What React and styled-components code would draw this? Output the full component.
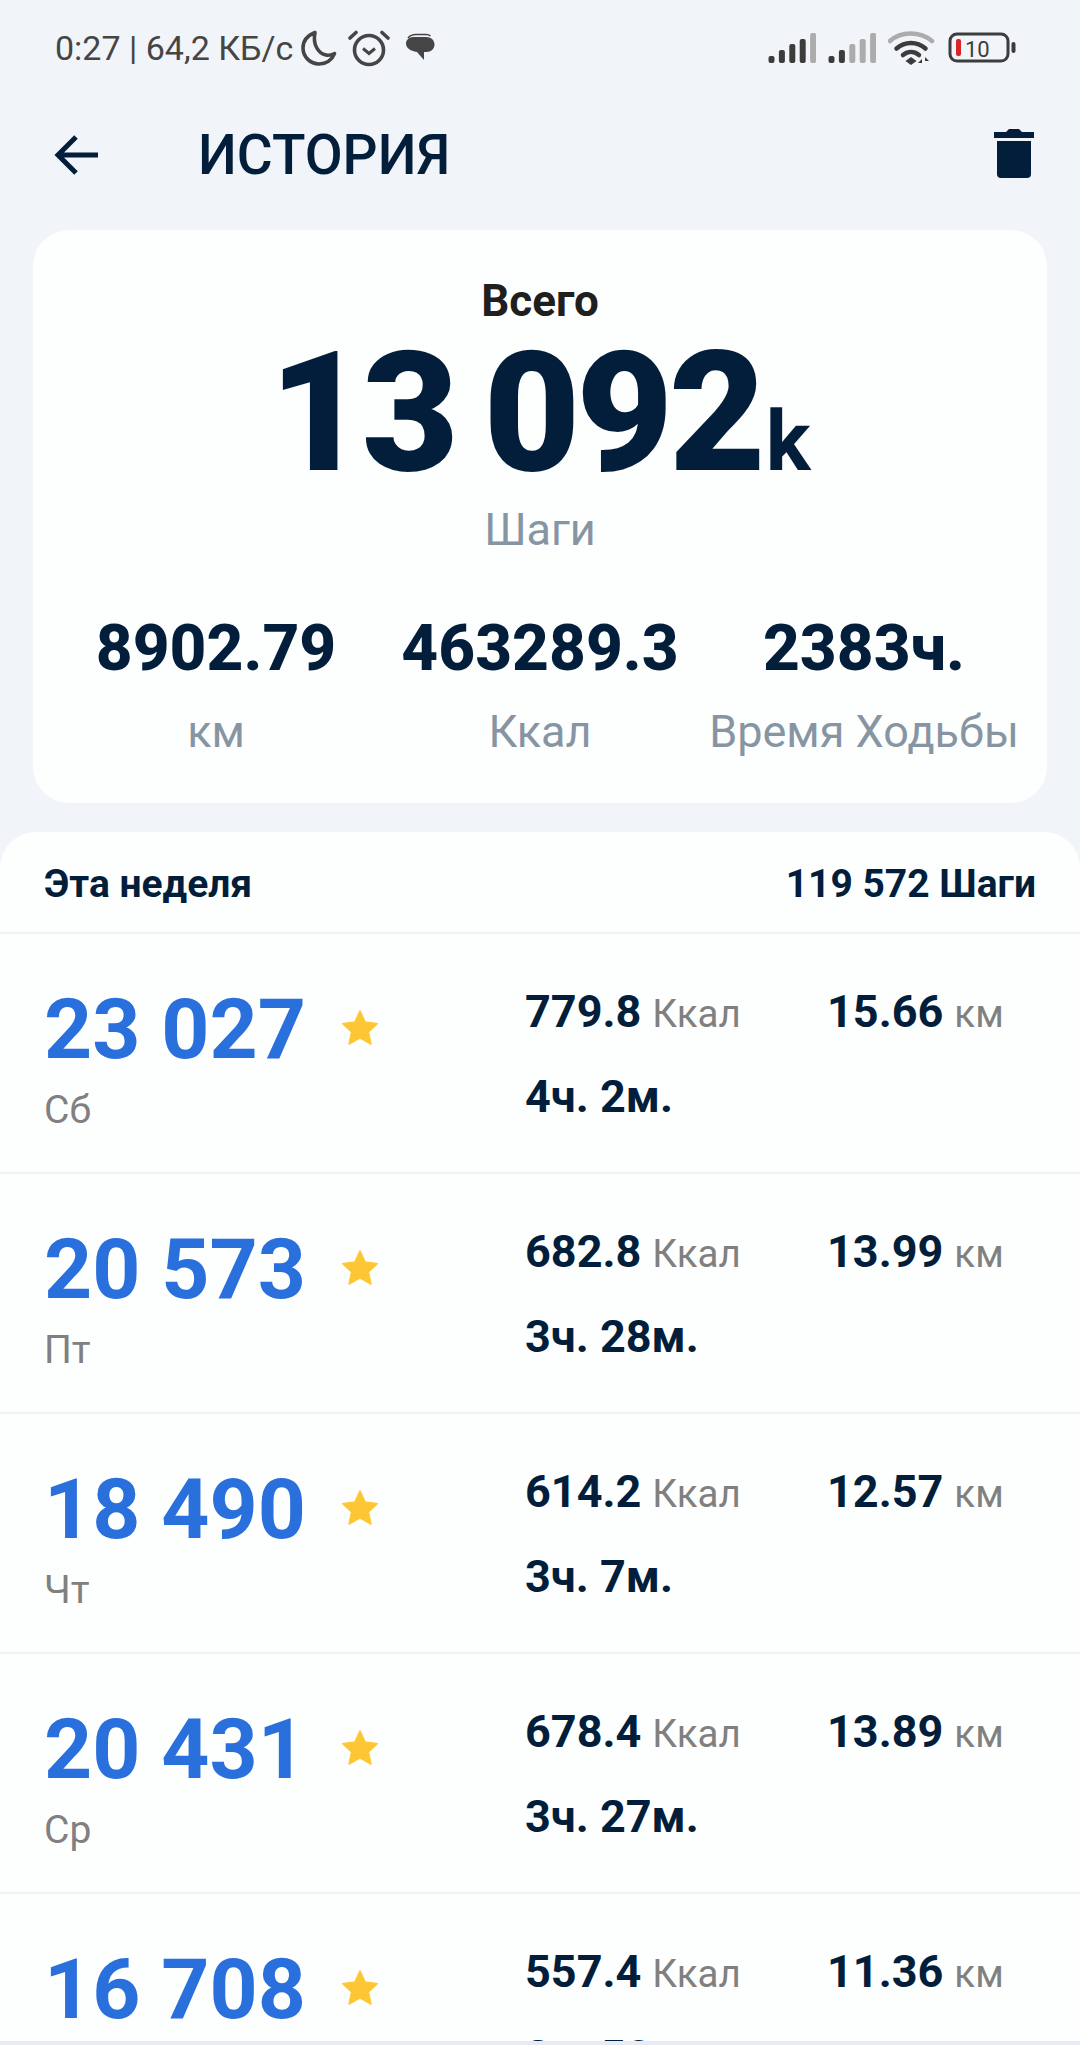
import React from "react";
import styled, { createGlobalStyle } from "styled-components";

const Global = createGlobalStyle`
  html, body { margin: 0; padding: 0; background: #f1f4f8; }
  * { box-sizing: border-box; }
`;

const Page = styled.div`
  width: 1080px;
  height: 2045px;
  background: #f1f4f8;
  font-family: Roboto, "Liberation Sans", sans-serif;
  display: flex;
  flex-direction: column;
  overflow: hidden;
  color: #031e3a;
`;

const StatusBar = styled.div`
  height: 96px;
  padding: 0 62px 0 55px;
  display: flex;
  align-items: center;
  justify-content: space-between;
  color: #454545;
`;
const StatusGroup = styled.div`
  display: flex;
  align-items: center;
  gap: ${(p) => p.$gap || 0}px;
`;
const StatusText = styled.span`
  font-size: 34px;
  letter-spacing: 0;
  margin-right: 7px;
`;

const Header = styled.div`
  height: 134px;
  padding: 0 46px 16px 54px;
  display: flex;
  align-items: center;
`;
const Title = styled.h1`
  margin: 0 0 0 100px;
  flex: 1;
  font-size: 55px;
  line-height: 60px;
  font-weight: 500;
`;
const TrashWrap = styled.div`
  display: flex;
  margin-bottom: 5px;
`;

const SummaryCard = styled.section`
  margin: 0 33px;
  height: 573px;
  background: #fdfefe;
  border-radius: 36px;
  padding: 46px 21px 0;
  display: flex;
  flex-direction: column;
  align-items: center;
`;
const Total = styled.div`
  font-size: 44px;
  line-height: 50px;
  font-weight: 700;
  color: #1f1f1f;
`;
const BigRow = styled.div`
  height: 152px;
  display: flex;
  align-items: baseline;
  line-height: 152px;
  margin-top: 11px;
`;
const BigNumber = styled.span`
  font-size: 167px;
  font-weight: 900;
  letter-spacing: -4px;
  word-spacing: -9px;
`;
const BigUnit = styled.span`
  margin-left: 4px;
  font-size: 84px;
  font-weight: 700;
`;
const Muted = styled.div`
  font-size: 45px;
  line-height: 50px;
  color: #8795a3;
`;
const StepsLabel = styled(Muted)`
  margin-top: 16px;
`;
const Stats = styled.div`
  width: 100%;
  margin-top: 59px;
  display: grid;
  grid-template-columns: repeat(3, 1fr);
`;
const Stat = styled.div`
  display: flex;
  flex-direction: column;
  align-items: center;
  gap: 23px;
  white-space: nowrap;
`;
const StatValue = styled.div`
  font-size: 64px;
  line-height: 70px;
  font-weight: 800;
`;

const ListPanel = styled.section`
  margin-top: 29px;
  flex: 1;
  min-height: 0;
  background: #fdfefe;
  border-radius: 36px 36px 0 0;
  overflow: hidden;
`;
const WeekHeader = styled.div`
  height: 102px;
  padding: 4px 44px 0;
  display: flex;
  align-items: center;
  justify-content: space-between;
  font-size: 39px;
  font-weight: 700;
  border-bottom: 2px solid #f0f2f7;
`;
const Row = styled.article`
  height: 240px;
  display: grid;
  grid-template-columns: 525px 302px 1fr;
  border-bottom: 2px solid #f0f2f7;
`;
const DayCell = styled.div`
  padding: 51px 0 0 44px;
`;
const StepLine = styled.div`
  display: flex;
  align-items: center;
  gap: 35px;
  height: 90px;
`;
const Steps = styled.span`
  font-size: 84px;
  line-height: 90px;
  font-weight: 700;
  color: #2a70dc;
`;
const StarWrap = styled.span`
  display: flex;
  margin-bottom: 6px;
`;
const Day = styled.div`
  margin-top: 13px;
  font-size: 39px;
  line-height: 44px;
  color: #808080;
`;
const MetricColumn = styled.div`
  padding-top: 54px;
`;
const Metric = styled.div`
  height: 48px;
  font-size: 45px;
  line-height: 48px;
  font-weight: 700;
  white-space: nowrap;
  margin-bottom: ${(p) => p.$mb || 0}px;
`;
const Unit = styled.span`
  margin-left: 11px;
  font-size: 38.5px;
  font-weight: 400;
  color: #808080;
`;

const BottomStrip = styled.div`
  height: 4px;
  background: #e6ebf6;
  flex: none;
`;

const Moon = () => (
  <svg width="38" height="38" viewBox="0 0 38 38" fill="none" stroke="#454545" strokeWidth="3.6">
    <path d="M15 3.500C7.500 6.500 3 12 3 19c0 9 7.500 16 16 16 7 0 13-4 15.500-10.500-3 1.500-6 2-8.500 1.500C18 24.500 12.500 15 15 3.500Z" strokeLinejoin="round" />
  </svg>
);
const Alarm = () => (
  <svg width="42" height="38" viewBox="0 0 42 38" fill="none" stroke="#454545" style={{ marginLeft: 10 }}>
    <circle cx="21" cy="21" r="14.500" strokeWidth="3.600" />
    <path d="M15 19.500l6 5 6-5" strokeWidth="3" />
    <path d="M2 9l6-5.500M40 9l-6-5.500" strokeWidth="3.600" strokeLinecap="round" />
  </svg>
);
const Chat = () => (
  <svg width="30" height="30" viewBox="0 0 30 30" style={{ marginLeft: 15 }}>
    <path d="M8 4h13c5 0 8.500 3 8.500 7.500S26 19 21.500 19H19v8l-7-8C5 18 1 14.500 1 10.500 1 7 4 4 8 4Z" fill="#454545" />
    <path d="M3 5C5 2.500 8 1.500 11 1.500h10c2 0 3.500.5 4.500 1.500" stroke="#454545" strokeWidth="1.400" fill="none" />
  </svg>
);
const Signal = ({ on }) => {
  const hs = [7, 13, 19, 24, 30];
  return (
    <svg width="48" height="32" viewBox="0 0 48 32">
      {hs.map((h, i) => (
        <rect key={i} x={i * 10.4 + 0.5} y={31 - h} width="6" height={h} rx="2" fill={i < on ? "#3c3c3c" : "#acacac"} />
      ))}
    </svg>
  );
};
const Wifi = () => (
  <svg width="48" height="36" viewBox="0 0 48 36" fill="none" strokeLinecap="round">
    <path d="M2 11C13 1 32 1 44 11" stroke="#acacac" strokeWidth="4.500" />
    <path d="M8.500 18.500C17 11 29 11 37.500 18.500" stroke="#3c3c3c" strokeWidth="4.500" />
    <path d="M15 25c5-4 11-4 16 0" stroke="#3c3c3c" strokeWidth="4.500" />
    <path d="M17.500 31l5.500-4 5.500 4-5.500 4Z" fill="#3c3c3c" />
    <path d="M34 29l-4 4h4ZM37 35V27l4 4h-4Z" fill="#3c3c3c" />
  </svg>
);
const Battery = () => (
  <svg width="70" height="32" viewBox="0 0 70 32" fill="none">
    <rect x="2" y="2" width="58" height="27" rx="7" stroke="#3c3c3c" strokeWidth="3" />
    <rect x="8" y="7" width="5" height="17" rx="2" fill="#d92525" />
    <text x="17" y="25" fontFamily="Roboto, sans-serif" fontSize="22" fill="#3c3c3c">10</text>
    <rect x="63.500" y="10" width="4" height="11" rx="2" fill="#3c3c3c" />
  </svg>
);
const BackArrow = () => (
  <svg width="44" height="44" viewBox="0 0 44 44" fill="none" stroke="#031e3a" strokeWidth="5">
    <path d="M44 22H4M22 4L4 22l18 18" />
  </svg>
);
const Trash = () => (
  <svg width="40" height="52" viewBox="0 0 40 52" fill="#031e3a">
    <path d="M0 5h12l3-3h10l3 3h12v6H0Z" />
    <path d="M3 14h34v33a4 4 0 0 1-4 4H7a4 4 0 0 1-4-4Z" />
  </svg>
);
const Star = () => (
  <svg width="38" height="36" viewBox="0 0 38 36">
    <path d="M19 1.500l5.400 11.400 12.600 1.600-9.300 8.600 2.500 12.400L19 29.300 7.800 35.500l2.500-12.400L1 14.500l12.600-1.600Z" fill="#fdc633" strokeLinejoin="round" stroke="#fdc633" strokeWidth="1" />
  </svg>
);

const rows = [
  { steps: "23 027", day: "Сб", kcal: "779.8", km: "15.66", time: "4ч. 2м." },
  { steps: "20 573", day: "Пт", kcal: "682.8", km: "13.99", time: "3ч. 28м." },
  { steps: "18 490", day: "Чт", kcal: "614.2", km: "12.57", time: "3ч. 7м." },
  { steps: "20 431", day: "Ср", kcal: "678.4", km: "13.89", time: "3ч. 27м." },
  { steps: "16 708", day: "Вт", kcal: "557.4", km: "11.36", time: "2ч. 50м." },
];

export default function App() {
  return (
    <Page>
      <Global />
      <StatusBar>
        <StatusGroup>
          <StatusText>0:27 | 64,2 КБ/с</StatusText>
          <Moon />
          <Alarm />
          <Chat />
        </StatusGroup>
        <StatusGroup $gap={12}>
          <Signal on={4} />
          <Signal on={2} />
          <Wifi />
          <Battery />
        </StatusGroup>
      </StatusBar>
      <Header>
        <BackArrow />
        <Title>ИСТОРИЯ</Title>
        <TrashWrap><Trash /></TrashWrap>
      </Header>
      <SummaryCard>
        <Total>Всего</Total>
        <BigRow>
          <BigNumber>13 092</BigNumber>
          <BigUnit>k</BigUnit>
        </BigRow>
        <StepsLabel>Шаги</StepsLabel>
        <Stats>
          <Stat><StatValue>8902.79</StatValue><Muted>км</Muted></Stat>
          <Stat><StatValue>463289.3</StatValue><Muted>Ккал</Muted></Stat>
          <Stat><StatValue>2383ч.</StatValue><Muted>Время Ходьбы</Muted></Stat>
        </Stats>
      </SummaryCard>
      <ListPanel>
        <WeekHeader>
          <span>Эта неделя</span>
          <span>119 572 Шаги</span>
        </WeekHeader>
        {rows.map((r) => (
          <Row key={r.day}>
            <DayCell>
              <StepLine>
                <Steps>{r.steps}</Steps>
                <StarWrap><Star /></StarWrap>
              </StepLine>
              <Day>{r.day}</Day>
            </DayCell>
            <MetricColumn>
              <Metric $mb={37}>{r.kcal}<Unit>Ккал</Unit></Metric>
              <Metric>{r.time}</Metric>
            </MetricColumn>
            <MetricColumn>
              <Metric>{r.km}<Unit>км</Unit></Metric>
            </MetricColumn>
          </Row>
        ))}
      </ListPanel>
      <BottomStrip />
    </Page>
  );
}
